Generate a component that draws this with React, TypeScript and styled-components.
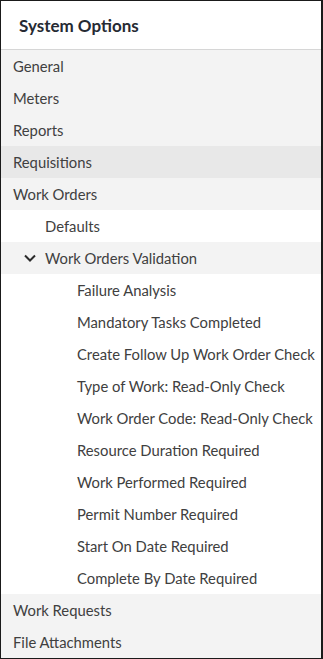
import React from 'react';
import styled, { createGlobalStyle } from 'styled-components';

const GlobalStyle = createGlobalStyle`
  html, body {
    margin: 0;
    padding: 0;
    background: #ffffff;
  }
  body {
    font-family: Lato, "Noto Sans", sans-serif;
  }
`;

const Panel = styled.div`
  box-sizing: border-box;
  width: 323px;
  height: 659px;
  border: 1px solid #1a1a1a;
  border-right-width: 2px;
  background: #f3f3f3;
  display: flex;
  flex-direction: column;
  overflow: hidden;
`;

const Header = styled.div`
  height: 48px;
  flex: none;
  display: flex;
  align-items: center;
  padding-left: 18px;
  background: #ffffff;
  border-bottom: 1px solid #d6d6d6;
  font-size: 17px;
  font-weight: 700;
  color: #262a33;
`;

const List = styled.div`
  display: flex;
  flex-direction: column;
`;

type RowProps = { $level: number; $tone: 'plain' | 'white' | 'active' };

const Row = styled.div<RowProps>`
  height: 32px;
  flex: none;
  display: flex;
  align-items: center;
  gap: 9px;
  padding-left: ${(p) => 12 + p.$level * 32}px;
  background: ${(p) =>
    p.$tone === 'white' ? '#ffffff' : p.$tone === 'active' ? '#e8e8e8' : '#f3f3f3'};
  font-size: 14.8px;
  color: #404040;
  white-space: nowrap;
`;

const Chevron = styled.svg`
  width: 12px;
  height: 12px;
  margin-left: -21px;
  flex: none;
`;

const Label = styled.span``;

const topItems = ['General', 'Meters', 'Reports'];
const checks = [
  'Failure Analysis',
  'Mandatory Tasks Completed',
  'Create Follow Up Work Order Check',
  'Type of Work: Read-Only Check',
  'Work Order Code: Read-Only Check',
  'Resource Duration Required',
  'Work Performed Required',
  'Permit Number Required',
  'Start On Date Required',
  'Complete By Date Required',
];

const App: React.FC = () => {
  return (
    <>
      <GlobalStyle />
      <Panel>
        <Header>System Options</Header>
        <List>
          {topItems.map((t) => (
            <Row key={t} $level={0} $tone="plain">
              <Label>{t}</Label>
            </Row>
          ))}
          <Row $level={0} $tone="active">
            <Label>Requisitions</Label>
          </Row>
          <Row $level={0} $tone="plain">
            <Label>Work Orders</Label>
          </Row>
          <Row $level={1} $tone="white">
            <Label>Defaults</Label>
          </Row>
          <Row $level={1} $tone="plain">
            <Chevron viewBox="0 0 12 12">
              <path d="M1 3.5 L6 8.5 L11 3.5" fill="none" stroke="#2b2b2b" strokeWidth="2" />
            </Chevron>
            <Label>Work Orders Validation</Label>
          </Row>
          {checks.map((t) => (
            <Row key={t} $level={2} $tone="white">
              <Label>{t}</Label>
            </Row>
          ))}
          <Row $level={0} $tone="plain">
            <Label>Work Requests</Label>
          </Row>
          <Row $level={0} $tone="plain">
            <Label>File Attachments</Label>
          </Row>
        </List>
      </Panel>
    </>
  );
};

export default App;
